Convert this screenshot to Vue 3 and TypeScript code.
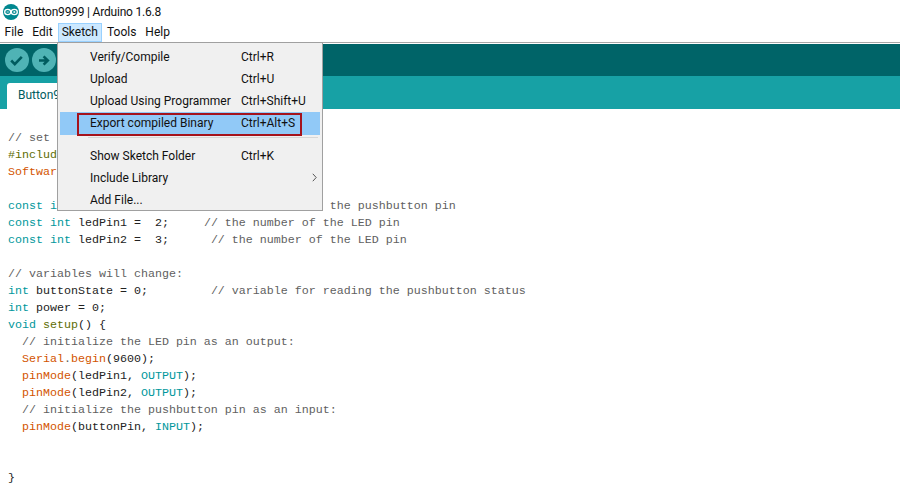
<script setup lang="ts">
type Seg = { t: string; c?: string };
const lines: Seg[][] = [
  [{ t: '// set pin numbers:', c: 'cm' }],
  [{ t: '#include <SoftwareSerial.h>', c: 'pp' }],
  [{ t: 'SoftwareSerial', c: 'fn' }, { t: ' mySerial(10, 11);' }],
  [],
  [{ t: 'const int', c: 'kw' }, { t: ' buttonPin = 7;' }, { t: '     // the number of the pushbutton pin', c: 'cm' }],
  [{ t: 'const int', c: 'kw' }, { t: ' ledPin1 =  2;' }, { t: '     // the number of the LED pin', c: 'cm' }],
  [{ t: 'const int', c: 'kw' }, { t: ' ledPin2 =  3;' }, { t: '      // the number of the LED pin', c: 'cm' }],
  [],
  [{ t: '// variables will change:', c: 'cm' }],
  [{ t: 'int', c: 'kw' }, { t: ' buttonState = 0;' }, { t: '         // variable for reading the pushbutton status', c: 'cm' }],
  [{ t: 'int', c: 'kw' }, { t: ' power = 0;' }],
  [{ t: 'void', c: 'kw' }, { t: ' ' }, { t: 'setup', c: 'st' }, { t: '() {' }],
  [{ t: '  // initialize the LED pin as an output:', c: 'cm' }],
  [{ t: '  ' }, { t: 'Serial', c: 'fn' }, { t: '.' , c: 'cm' }, { t: 'begin', c: 'fn' }, { t: '(9600);' }],
  [{ t: '  ' }, { t: 'pinMode', c: 'fn' }, { t: '(ledPin1, ' }, { t: 'OUTPUT', c: 'kw' }, { t: ');' }],
  [{ t: '  ' }, { t: 'pinMode', c: 'fn' }, { t: '(ledPin2, ' }, { t: 'OUTPUT', c: 'kw' }, { t: ');' }],
  [{ t: '  // initialize the pushbutton pin as an input:', c: 'cm' }],
  [{ t: '  ' }, { t: 'pinMode', c: 'fn' }, { t: '(buttonPin, ' }, { t: 'INPUT', c: 'kw' }, { t: ');' }],
  [],
  [],
  [{ t: '}' }],
];
const menuBar = ['File', 'Edit', 'Sketch', 'Tools', 'Help'];
</script>

<template>
  <div class="app">
    <header class="title">
      <svg class="logo" width="18" height="18" viewBox="0 0 18 18">
        <circle cx="9" cy="9" r="8" fill="#00878f" />
        <ellipse cx="5.7" cy="9" rx="3" ry="2.6" fill="none" stroke="#fff" stroke-width="1.3" />
        <ellipse cx="12.3" cy="9" rx="3" ry="2.6" fill="none" stroke="#fff" stroke-width="1.3" />
        <path d="M4.6 9h2.2M11.2 9h2.2M12.3 7.9v2.2" stroke="#fff" stroke-width="0.8" />
      </svg>
      <span class="ttl">Button9999 | Arduino 1.6.8</span>
    </header>
    <nav class="menubar">
      <span v-for="m in menuBar" :key="m" class="mi" :class="{ open: m === 'Sketch' }">{{ m }}</span>
    </nav>
    <div class="toolbar">
      <button class="tb" aria-label="Verify">
        <svg width="13" height="11" viewBox="0 0 13 11"><path d="M1.2 5.5l3.6 3.6L11.8 1.8" fill="none" stroke="#005c5f" stroke-width="2.6" /></svg>
      </button>
      <button class="tb" aria-label="Upload">
        <svg width="12" height="11" viewBox="0 0 12 11"><path d="M1 5.5h8M5.6 1.4L9.8 5.5 5.6 9.6" fill="none" stroke="#005c5f" stroke-width="2.6" /></svg>
      </button>
    </div>
    <div class="tabs"><div class="tab">Button9999</div></div>
    <main class="editor">
      <div v-for="(l, i) in lines" :key="i" class="line"><span v-for="(s, j) in l" :key="j" :class="s.c">{{ s.t }}</span></div>
    </main>

    <div class="menu">
      <div class="row"><span class="lab">Verify/Compile</span><span class="key">Ctrl+R</span></div>
      <div class="row"><span class="lab">Upload</span><span class="key">Ctrl+U</span></div>
      <div class="row"><span class="lab">Upload Using Programmer</span><span class="key">Ctrl+Shift+U</span></div>
      <div class="row hot"><span class="lab">Export compiled Binary</span><span class="key">Ctrl+Alt+S</span><i class="redbox"></i></div>
      <div class="sep"></div>
      <div class="row"><span class="lab">Show Sketch Folder</span><span class="key">Ctrl+K</span></div>
      <div class="row"><span class="lab">Include Library</span>
        <svg class="arrow" width="5" height="9" viewBox="0 0 5 9"><path d="M.8.8L4.2 4.5.8 8.2" fill="none" stroke="#555" stroke-width="1" /></svg>
      </div>
      <div class="row"><span class="lab">Add File...</span></div>
    </div>
  </div>
</template>

<style>
html, body { margin: 0; background: #fff; overflow: hidden; }
</style>

<style scoped>
.app {
  position: relative;
  width: 900px;
  height: 488px;
  overflow: hidden;
  display: flex;
  flex-direction: column;
  font-family: Roboto, "Noto Sans", sans-serif;
  font-size: 12px;
  color: #111;
  background: #fff;
}
.title {
  height: 23px;
  display: flex;
  align-items: center;
  gap: 4px;
  padding: 1px 0 0 2px;
  box-sizing: border-box;
  flex: none;
}
.ttl { letter-spacing: -0.2px; }
.logo { flex: none; }
.menubar {
  height: 19px;
  flex: none;
  display: flex;
  gap: 1px;
  padding-left: 0.5px;
  border-bottom: 1px solid #a8a8a8;
}
.mi {
  padding: 0 4px;
  line-height: 18px;
  height: 19px;
  box-sizing: border-box;
}
.mi.open {
  background: #cce8ff;
  box-shadow: inset 0 0 0 1px #99d1ff;
}
.toolbar {
  margin-top: 1px;
  height: 32px;
  flex: none;
  background: #006468;
  display: flex;
  align-items: center;
  gap: 3px;
  padding-left: 4.5px;
}
.tb {
  width: 24px;
  height: 24px;
  padding: 0;
  border: none;
  border-radius: 50%;
  background: #4fb3b5;
  display: flex;
  align-items: center;
  justify-content: center;
}
.tabs {
  height: 33px;
  flex: none;
  background: #17a1a5;
  display: flex;
  align-items: flex-end;
  padding-left: 7px;
}
.tab {
  width: 90px;
  height: 26px;
  background: #fff;
  border-radius: 3px 3px 0 0;
  box-sizing: border-box;
  padding: 3px 0 0 11px;
  line-height: 18px;
  color: #005c5f;
}
.editor {
  flex: 1;
  padding: 21px 0 0 8px;
  font-family: "Liberation Mono", monospace;
  font-size: 11.67px;
  color: #222;
}
.line {
  height: 17px;
  line-height: 17px;
  white-space: pre;
}
.cm { color: #5f5f5f; }
.kw { color: #00979c; }
.fn { color: #d35400; }
.st { color: #5e6d03; }
.pp { color: #5e6d03; }
.menu {
  position: absolute;
  left: 57px;
  top: 42px;
  width: 266px;
  height: 169px;
  box-sizing: border-box;
  border: 1px solid #a0a0a0;
  background: #f0f0f0;
  padding: 3px 2px 0;
  z-index: 2;
}
.row {
  position: relative;
  height: 22px;
  line-height: 22px;
  display: flex;
  white-space: nowrap;
}
.lab { width: 181px; padding-left: 30px; box-sizing: border-box; flex: none; }
.hot { background: #91c9f7; height: 23px; line-height: 23px; }
.redbox {
  position: absolute;
  left: 17px;
  top: 1px;
  width: 225px;
  height: 23px;
  box-sizing: border-box;
  border: 2px solid #a5131c;
}
.sep {
  height: 1px;
  margin: 2px 2px 7px 28px;
  background: #d7d7d7;
}
.arrow { position: absolute; right: 3px; top: 6px; }
</style>
